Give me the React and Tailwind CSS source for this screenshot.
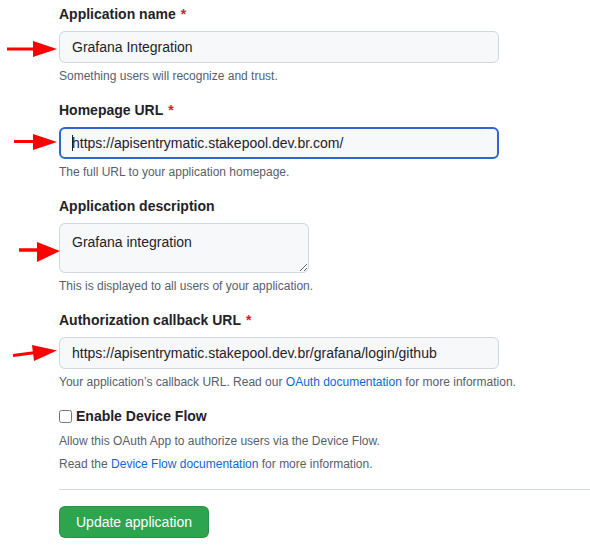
import React from 'react';

const Label = ({ children, required }) => (
  <label className="block text-sm font-bold leading-5 text-[#1f2328] mb-[7px]">
    {children}
    {required && <span className="ml-[5px] text-[#cf222e]">*</span>}
  </label>
);

const Help = ({ children }) => (
  <p className="mt-1 text-xs leading-[18px] text-[#57606a]">{children}</p>
);

const inputBase =
  'block h-8 w-[440px] rounded-md bg-[#f6f8fa] text-sm leading-5 text-[#1f2328] outline-none';

export default function App() {
  return (
    <div className="relative w-[590px] h-[553px] overflow-hidden bg-white font-['Liberation_Sans',Arial,sans-serif]">
      <form className="pl-[59px] pt-1" onSubmit={(e) => e.preventDefault()}>
        {/* Application name */}
        <div>
          <Label required>Application name</Label>
          <input
            className={`${inputBase} border border-[#d0d7de] px-3`}
            defaultValue="Grafana Integration"
          />
          <Help>Something users will recognize and trust.</Help>
        </div>

        {/* Homepage URL */}
        <div className="mt-[15px]">
          <Label required>Homepage URL</Label>
          <div className="relative">
            <input
              className={`${inputBase} border-2 border-[#3064d2] pl-[11px] pr-3`}
              defaultValue="https://apisentrymatic.stakepool.dev.br.com/"
            />
            <span className="absolute left-[13px] top-2 h-4 w-px bg-[#1f2328]" />
          </div>
          <Help>The full URL to your application homepage.</Help>
        </div>

        {/* Application description */}
        <div className="mt-[15px]">
          <Label>Application description</Label>
          <textarea
            className="block h-[50px] w-[250px] rounded-md border border-[#d0d7de] bg-[#f6f8fa] px-3 py-2 text-sm leading-5 text-[#1f2328] outline-none"
            defaultValue="Grafana integration"
          />
          <Help>This is displayed to all users of your application.</Help>
        </div>

        {/* Callback URL */}
        <div className="mt-[15px]">
          <Label required>Authorization callback URL</Label>
          <input
            className={`${inputBase} border border-[#d0d7de] px-3`}
            defaultValue="https://apisentrymatic.stakepool.dev.br/grafana/login/github"
          />
          <Help>
            Your application’s callback URL. Read our{' '}
            <a className="text-[#0969da]" href="#">OAuth documentation</a> for more information.
          </Help>
        </div>

        {/* Device flow */}
        <div className="mt-[15px]">
          <label className="flex items-center h-5 text-sm font-bold text-[#1f2328]">
            <input type="checkbox" className="m-0 h-[13px] w-[13px]" />
            <span className="ml-1">Enable Device Flow</span>
          </label>
          <p className="mt-[6px] text-xs leading-[18px] text-[#57606a]">
            Allow this OAuth App to authorize users via the Device Flow.
          </p>
          <p className="mt-[5px] text-xs leading-[18px] text-[#57606a]">
            Read the <a className="text-[#0969da]" href="#">Device Flow documentation</a> for more information.
          </p>
        </div>

        <hr className="mt-4 border-0 border-t border-[#d0d7de]" />

        <button
          type="submit"
          className="mt-4 h-8 rounded-md border border-[rgba(31,35,40,0.15)] bg-[#2da44e] px-4 text-sm leading-5 text-white"
        >
          Update application
        </button>
      </form>

      {/* red annotation arrows */}
      <svg className="pointer-events-none absolute left-0 top-0" width="590" height="553">
        <g fill="#ff0000" stroke="#ff0000">
          <line x1="7" y1="49" x2="36" y2="49" strokeWidth="3" />
          <polygon points="33,41 57,49 33,57" stroke="none" />

          <line x1="14" y1="141.5" x2="36" y2="141.5" strokeWidth="3" />
          <polygon points="33,134 57,142 33,150" stroke="none" />

          <line x1="19" y1="250" x2="40" y2="250" strokeWidth="3.5" />
          <polygon points="37,242 60,251 37,262" stroke="none" />

          <line x1="13" y1="355.5" x2="36" y2="352.5" strokeWidth="3" />
          <polygon points="32,345 57,350.5 34,361" stroke="none" />
        </g>
      </svg>
    </div>
  );
}
